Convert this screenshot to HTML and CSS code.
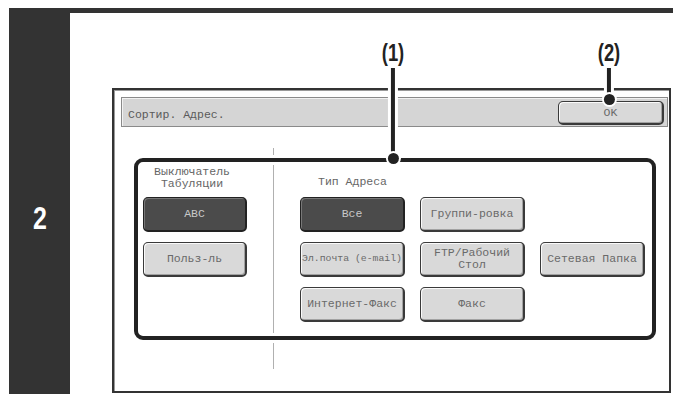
FILE: index.html
```html
<!DOCTYPE html>
<html lang="ru">
<head>
    <meta charset="UTF-8">
    <meta name="viewport" content="width=device-width, initial-scale=1.0">
    <title>Сортир. Адрес.</title>
    <link rel="stylesheet" href="styles.css">
</head>
<body>
    <div class="page">
        <div class="step"><span class="step-num">2</span></div>

        <div class="main">
            <div class="screen">
                <div class="title-bar">
                    <span class="title">Сортир. Адрес.</span>
                    <button class="btn btn-ok">OK</button>
                </div>

                <div class="sort-body">
                    <div class="tab-col">
                        <div class="group-label tab-label">Выключатель<br>Табуляции</div>
                        <div class="btn-stack">
                            <button class="btn btn-on">ABC</button>
                            <button class="btn">Польз-ль</button>
                        </div>
                    </div>

                    <div class="divider"></div>

                    <div class="type-col">
                        <div class="group-label type-label">Тип Адреса</div>
                        <div class="btn-grid">
                            <button class="btn btn-on">Все</button>
                            <button class="btn">Группи-ровка</button>
                            <span></span>
                            <button class="btn btn-tight">Эл.почта (e-mail)</button>
                            <button class="btn">FTP/Рабочий<br>Стол</button>
                            <button class="btn">Сетевая Папка</button>
                            <button class="btn">Интернет-Факс</button>
                            <button class="btn">Факс</button>
                        </div>
                    </div>
                </div>
            </div>
        </div>

        <!-- callouts drawn over the screen -->
        <div class="frame-box"></div>

        <div class="callout callout-1">
            <div class="callout-num">(1)</div>
            <div class="callout-line"></div>
            <div class="callout-dot"></div>
        </div>

        <div class="callout callout-2">
            <div class="callout-num">(2)</div>
            <div class="callout-line"></div>
            <div class="callout-dot"></div>
        </div>
    </div>
</body>
</html>
```

FILE: styles.css
```css
* {
    box-sizing: border-box;
}

body {
    margin: 0;
    padding: 0;
    background: #ffffff;
}

.page {
    position: relative;
    display: flex;
    height: 394px;
    padding-top: 8px;
    overflow: hidden;
}

.step {
    width: 61px;
    margin-left: 9px;
    padding-top: 194px;
    background: #333333;
    color: #ffffff;
    font-family: "Liberation Sans", Arial, sans-serif;
    font-weight: bold;
    font-size: 32px;
    line-height: 32px;
    text-align: center;
}

.step-num {
    display: inline-block;
    transform: scaleX(0.78);
}

.main {
    flex: 1;
    border-top: 5px solid #333333;
    padding: 75px 2px 1px 42px;
}

.screen {
    height: 100%;
    display: flex;
    flex-direction: column;
    border: 2px solid #333333;
    box-shadow: inset 1px 1px 0 #9a9a9a;
    font-family: "Liberation Mono", monospace;
    color: #5a5a5a;
}

.title-bar {
    height: 30px;
    margin: 7px 1px 0 7px;
    display: flex;
    align-items: center;
    justify-content: space-between;
    background: #d5d5d5;
    border: 1px solid #8a8a8a;
    box-shadow: inset 1px 1px 0 #f2f2f2;
}

.title {
    padding-left: 6px;
    padding-top: 4px;
    font-size: 11.5px;
}

.btn {
    height: 35px;
    padding: 0;
    border: 1px solid #3a3a3a;
    border-right-width: 2px;
    border-bottom-width: 2px;
    border-radius: 5px;
    background: #d9d9d9;
    box-shadow: inset 1px 1px 0 #fafafa, inset -1px -1px 0 #a2a2a2;
    font-family: "Liberation Mono", monospace;
    font-weight: normal;
    font-size: 11.5px;
    line-height: 12px;
    color: #6a6a6a;
    text-align: center;
    white-space: nowrap;
}

.btn-on {
    background: #4b4b4b;
    border-color: #222222;
    box-shadow: inset 1px 1px 0 #777777;
    color: #c8c8c8;
}

.btn-tight {
    font-size: 9.8px;
    overflow: visible;
}

.btn-ok {
    width: 106px;
    height: 24px;
    margin-right: 3px;
    margin-top: 2px;
}

.sort-body {
    flex: 1;
    display: flex;
    padding-left: 29px;
}

.tab-col,
.type-col {
    padding-top: 39px;
}

.group-label {
    height: 24px;
    margin-bottom: 7px;
    font-size: 11.5px;
    line-height: 12px;
    text-align: center;
    color: #666666;
}

.tab-label {
    width: 104px;
    padding-right: 6px;
}

.type-label {
    width: 105px;
    padding-top: 10px;
}

.btn-stack {
    width: 104px;
    display: flex;
    flex-direction: column;
    gap: 10px;
}

.divider {
    width: 1px;
    margin: 21px 26px 22px;
    background: #b0b0b0;
}

.btn-grid {
    display: grid;
    grid-template-columns: repeat(3, 105px);
    grid-auto-rows: 35px;
    column-gap: 15px;
    row-gap: 10px;
}

.frame-box {
    position: absolute;
    left: 134px;
    top: 158px;
    width: 522px;
    height: 182px;
    border: 4px solid #222222;
    border-radius: 9px;
    box-shadow: 0 0 0 3px #ffffff, inset 0 0 0 3px #ffffff;
}

.callout {
    position: absolute;
    top: 42px;
    display: flex;
    flex-direction: column;
    align-items: center;
    transform: translateX(-50%);
}

.callout-1 {
    left: 393px;
}

.callout-2 {
    left: 609px;
}

.callout-num {
    font-family: "Liberation Sans", Arial, sans-serif;
    font-weight: bold;
    font-size: 23px;
    line-height: 22px;
    color: #222222;
    transform: scaleX(0.8);
}

.callout-line {
    width: 4px;
    margin-top: 4px;
    background: #222222;
    box-shadow: 0 0 0 3px #ffffff;
}

.callout-1 .callout-line {
    height: 90px;
}

.callout-2 .callout-line {
    height: 31px;
}

.callout-dot {
    width: 11px;
    height: 11px;
    margin-top: -5px;
    border-radius: 50%;
    background: #222222;
    box-shadow: 0 0 0 2px #ffffff;
}
```
